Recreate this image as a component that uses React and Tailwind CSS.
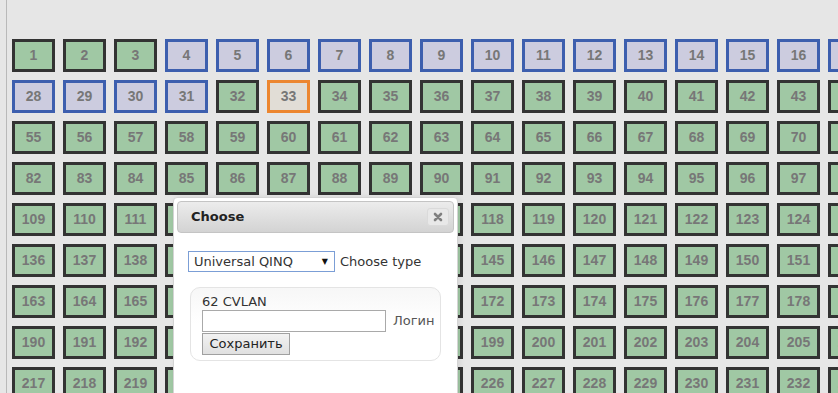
import React from "react";

const BLUE = new Set(Array.from({ length: 28 }, (_, i) => i + 4));

function Cell({ n }) {
    let cls = "bg-[#a0c8a4] border-[#333333]";
    if (BLUE.has(n)) cls = "bg-[#ccccdf] border-[#3d5fae]";
    if (n === 33) cls = "bg-[#e1ddd6] border-[#ec8630]";
    return (
        <div className={`w-[43px] h-[33px] border-[3px] flex items-center justify-center text-[14px] font-bold text-[#777777] ${cls}`}>
            {n}
        </div>
    );
}

export default function App() {
    const cells = Array.from({ length: 243 }, (_, i) => i + 1);

    return (
        <div className="relative w-[838px] h-[393px] overflow-hidden bg-[#e6e6e6] font-['Liberation_Sans',Arial,sans-serif]">
            <div className="ml-[6px] h-full border-l border-[#b9b9b9] pl-[5px] pt-[39px]">
                <div className="grid grid-cols-[repeat(27,43px)] gap-2">
                    {cells.map((n) => (
                        <Cell key={n} n={n} />
                    ))}
                </div>
            </div>

            {/* dialog */}
            <div className="absolute left-[173px] top-[197px] w-[285px] h-[210px] bg-white border border-[#d4d4d4] rounded-[4px] p-[3px] shadow-[2px_0_6px_rgba(0,0,0,0.08)] font-['DejaVu_Sans',Verdana,sans-serif] text-[13px] text-[#333333]">
                <div className="h-[32px] flex items-center justify-between pl-[13px] pr-[4px] rounded-[4px] border border-[#c4c4c4] bg-gradient-to-b from-[#ececec] to-[#d3d3d3]">
                    <span className="font-bold text-[13px] text-[#222222]">Choose</span>
                    <div className="w-[22px] h-[18px] flex items-center justify-center rounded-[3px] border border-[#dadada] bg-[#e8e8e8]">
                        <svg width="10" height="10" viewBox="0 0 10 10">
                            <path d="M2 2L8 8M8 2L2 8" stroke="#7f7f7f" strokeWidth="2.6" strokeLinecap="round" />
                        </svg>
                    </div>
                </div>

                <div className="pl-[11px] pr-[14px] pt-[18px]">
                    <div className="flex items-center gap-[5px]">
                        <div className="w-[147px] h-[21px] border border-[#7b9ed6] flex items-center justify-between pl-[5px] pr-[6px] bg-white">
                            <span>Universal QINQ</span>
                            <span className="text-[8px] text-[#111111]">▼</span>
                        </div>
                        <span>Choose type</span>
                    </div>

                    <div className="mt-[15px] ml-[2px] w-[251px] h-[74px] rounded-[10px] border border-[#e4e4e4] bg-gradient-to-b from-[#f7f7f7] via-white to-white pl-[11px] pt-[6px]">
                        <div className="leading-[16px]">62 CVLAN</div>
                        <div className="flex items-center gap-[7px]">
                            <div className="w-[184px] h-[22px] border border-[#a9a9a9] bg-white" />
                            <span className="text-[#555555]">Логин</span>
                        </div>
                        <div className="mt-[1px] w-[88px] h-[22px] border border-[#a0a0a0] bg-gradient-to-b from-[#f2f2f2] to-[#e0e0e0] flex items-center justify-center text-[13px] text-[#222222]">
                            Сохранить
                        </div>
                    </div>
                </div>
            </div>
        </div>
    );
}
